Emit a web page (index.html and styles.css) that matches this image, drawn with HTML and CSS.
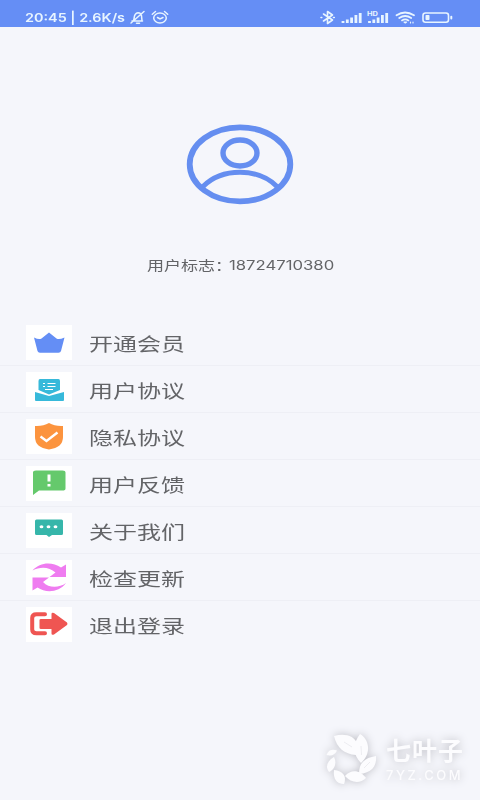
FILE: index.html
```html
<!DOCTYPE html>
<html lang="zh-CN">
<head>
<meta charset="utf-8">
<title>用户中心</title>
<link rel="stylesheet" href="styles.css">
</head>
<body>
<header class="status">
  <div class="clock"><span>20:45 | 2.6K/s</span></div>
  <svg class="left-icons" width="42" height="18" viewBox="0 0 42 18" fill="none" stroke="#e8f5ff" stroke-width="1.5" stroke-linecap="round">
    <path d="M3 13h10.500M4.500 12.500C6 9.500 4 5.500 9 4.700c2 0 3.300 1 3.500 3l.5 5M7.500 15.200h3M2 15 15 3.500"/>
    <ellipse cx="31" cy="10" rx="6.300" ry="5"/><path d="m28.500 9.500 2.500 1.500L34 9.500M23.300 6.200l3.200-2.700M38.700 6.200l-3.200-2.700"/>
  </svg>
  <svg class="right-icons" width="140" height="18" viewBox="0 0 140 18" fill="none" stroke="#e8f5ff" stroke-width="1.600" stroke-linecap="round" stroke-linejoin="round">
    <path d="m3.500 6 9 6-5 3.500v-12l5 3.500-9 6M1 9.500h.8M13.500 9.500h.8"/>
    <g stroke-width="2.800" stroke-linecap="butt"><path d="M23 15v-2M27.300 15v-3.500M31.600 15V9.500M35.900 15V7M40.200 15V5"/><path d="M49.500 15v-2M53.800 15v-3.500M58.100 15V9.500M62.400 15V7M66.700 15V5"/></g>
    <text class="hd" x="47" y="8" textLength="11" lengthAdjust="spacingAndGlyphs">HD</text>
    <g stroke-width="1.800"><path d="M76.500 7.300q8.500-5.600 17.500 0M79.200 10q6-4 12 0M82 12.400q3.200-2 6.400 0"/></g>
    <path d="m84 14 1.300 1 1.300-1zM90.500 14v1M93 14v1" stroke-width="1.200"/>
    <rect x="103" y="5" width="25.500" height="9.200" rx="2.500"/><rect x="105.500" y="7" width="4" height="5" rx=".8" fill="#e8f5ff" stroke="none"/><path d="M131.300 8.800v1.800" stroke-width="2"/>
  </svg>
</header>

<main>
  <section class="profile">
    <svg class="avatar" width="110" height="84" viewBox="0 0 110 84" fill="none" stroke="#658ef0">
      <ellipse cx="55" cy="42.300" rx="50.300" ry="37" stroke-width="5.800"/>
      <ellipse cx="55" cy="31" rx="17" ry="13" stroke-width="5.400"/>
      <path d="M18 64.500C37 45.500 73 45.500 92 64.500" stroke-width="5"/>
    </svg>
    <p class="user"><span class="user-title">用户标志：</span><span class="user-id">18724710380</span></p>
  </section>

  <nav class="menu">
    <a class="row"><span class="tile"><svg width="46" height="35" viewBox="0 0 46 35"><path d="M8 12.500Q13 15 15.500 13.500L23 7.500 30.500 13.500Q33 15 38.500 12.500L35 26Q34.500 27.700 32.500 27.700H14Q12 27.700 11.500 26Z" fill="#648ef5"/></svg></span><span class="label">开通会员</span></a>
    <a class="row"><span class="tile"><svg width="46" height="35" viewBox="0 0 46 35"><path d="M12.500 18V9Q12.500 7 14 7H32.500Q34 7 34 9V18L23 22.500Z M9 20 23 24 38 20V28Q38 29 37 29H10Q9 29 9 28Z" fill="#37b9da"/><path d="M17 11.500h2M21.500 11.500h8M17 14.500h2M21.500 14.500h8M19 17.500h8" stroke="#fff" stroke-width="1.200"/></svg></span><span class="label">用户协议</span></a>
    <a class="row"><span class="tile"><svg width="46" height="35" viewBox="0 0 46 35"><path d="M23 4Q29 7.500 37 7V18Q37 28.500 23 30.500 9 28.500 9 18V7Q17 7.500 23 4Z" fill="#fc943e"/><path d="m14.500 17.500 6 4.500 11-8.500" fill="none" stroke="#fff" stroke-width="2.400"/></svg></span><span class="label">隐私协议</span></a>
    <a class="row"><span class="tile"><svg width="46" height="35" viewBox="0 0 46 35"><path d="M7 6.500Q7 4.500 10 4.500H36.500Q39.500 4.500 39.500 6.500V22.500Q39.500 24.500 36.500 24.500H13L7 29Z" fill="#65c96c"/><path d="M23 8.500v7M23 18v2.500" stroke="#fff" stroke-width="3"/></svg></span><span class="label">用户反馈</span></a>
    <a class="row"><span class="tile"><svg width="46" height="35" viewBox="0 0 46 35"><path d="M10.500 6.500H35.500Q37 6.500 37 8V20.500Q37 22 35.500 22H26L23 24 20.500 22H10.500Q9 22 9 20.500V8Q9 6.500 10.500 6.500Z" fill="#36b6aa"/><g fill="#fff"><ellipse cx="15.500" cy="13.800" rx="1.900" ry="1.500"/><ellipse cx="22.500" cy="13.800" rx="1.900" ry="1.500"/><ellipse cx="29.500" cy="13.800" rx="1.900" ry="1.500"/></g></svg></span><span class="label">关于我们</span></a>
    <a class="row"><span class="tile"><svg width="46" height="35" viewBox="0 0 46 35" fill="#ef7cf0"><path d="M6.500 10.500C14 2 26 1.500 35 7.500L40 4.500V17H23.500L29.500 12.500C23 6.500 14 6.500 6.500 10.500Z"/><path d="M40 23C33 32.500 20 33.500 11.500 27.500L6.500 30.500V17.500H23L17 22C23 28.500 33 28 40 23Z"/></svg></span><span class="label">检查更新</span></a>
    <a class="row"><span class="tile"><svg width="46" height="35" viewBox="0 0 46 35"><path d="M19 7.200H10.500Q6.200 7.200 6.200 11V22.500Q6.200 26.300 10.500 26.300H19" fill="none" stroke="#ef5552" stroke-width="4" stroke-linecap="round"/><path d="M13.500 13Q13.500 12 15 12H25.500V7Q25.500 5 28 6L41 15.500Q42 17 41 18L28 27.500Q25.500 28.500 25.500 26.500V22H15Q13.500 22 13.500 21Z" fill="#ef5552"/></svg></span><span class="label">退出登录</span></a>
  </nav>
</main>

<footer class="brand">
  <svg width="54" height="56" viewBox="0 0 54 56" fill="#fcfcfe">
    <path d="M9 5C20 2 30 5 32 13Q33 19 31 24C19 23 12 17 9 5Z"/><path d="M35 3C44 8 47 22 36 32C27 23 28 12 35 3Z"/><path d="M51 25C52 36 46 42 34 43C34 32 39 27 51 25Z"/><path d="M20 45C27 37 36 40 41 47C35 53 26 52 20 45Z"/><path d="M9 39C18 40 22 45 19 53C11 53 8 47 9 39Z"/><path d="M9 26C12 32 10 38 4 41C0 36 2 30 9 26Z"/><path d="M1.500 24Q4 17 12 19.500 9 26 1.500 24Z"/>
    <path d="m19 11 8 5M36 15l.5 9M45 31l-6 6" stroke="#e9e9ee" stroke-width=".8" fill="none"/>
  </svg>
  <div class="brand-text"><span class="brand-name">七叶子</span><span class="brand-site">7YZ.COM</span></div>
</footer>
</body>
</html>
```
FILE: styles.css
```css
* { box-sizing: border-box; }

body {
  margin: 0;
  height: 800px;
  overflow: hidden;
  position: relative;
  background: #f5f6fb;
  color: #636467;
  font-family: Roboto, "Noto Sans CJK SC", sans-serif;
}

.status {
  height: 27px;
  padding: 8px 0 0 25px;
  display: flex;
  background: #658ef5;
  color: #e8f5ff;
}

.clock {
  width: 104px;
  padding-top: 1px;
  font: 600 12px/18px Inter, sans-serif;
  white-space: nowrap;
}

.clock span {
  display: inline-block;
  transform: scaleX(1.2);
  transform-origin: left;
}

.right-icons { margin-left: 149px; }

.hd {
  font: 700 6px Inter, sans-serif;
  fill: #e8f5ff;
  stroke: none;
}

.profile {
  height: 292px;
  padding-top: 95px;
}

.avatar {
  display: block;
  margin-left: 185px;
}

.user {
  display: flex;
  margin: 49px 0 0 147px;
  height: 20px;
  line-height: 20px;
  font-size: 13px;
  white-space: nowrap;
}

.user-title {
  width: 82px;
  font-family: "Noto Sans CJK SC", sans-serif;
  transform: scaleX(1.31);
  transform-origin: left;
}

.user-id {
  padding-top: 1px;
  font-family: Inter, sans-serif;
  font-size: 12.5px;
  transform: scaleX(1.335);
  transform-origin: left;
}

.row {
  display: flex;
  align-items: center;
  height: 47px;
  padding-left: 26px;
  border-bottom: 1px solid #eeeff5;
}

.row:last-child { border-bottom-color: transparent; }

.tile {
  width: 46px;
  height: 35px;
  background: #fff;
}

.tile svg { display: block; }

.label {
  margin-left: 17px;
  padding-top: 2px;
  font: 400 18px/26px "Noto Sans CJK SC", sans-serif;
  white-space: nowrap;
  transform: scaleX(1.333);
  transform-origin: left;
}

.brand {
  position: absolute;
  left: 325px;
  top: 731px;
  display: flex;
  color: #fcfcfe;
  filter: drop-shadow(0 0 4px #bdbdc4);
}

.brand-text {
  display: flex;
  flex-direction: column;
  margin-left: 7px;
}

.brand-name {
  font: 700 25px/36px "Noto Sans CJK SC", sans-serif;
  letter-spacing: 1px;
}

.brand-site {
  font: 500 13px/16px Inter, sans-serif;
  letter-spacing: 2.5px;
  padding-top: 0;
}
```
